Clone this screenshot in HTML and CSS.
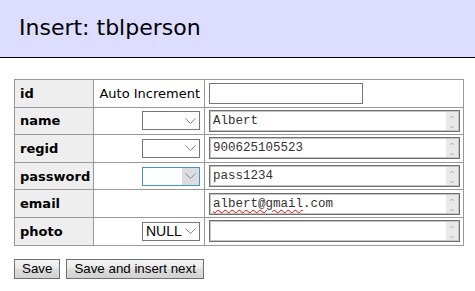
FILE: index.html
```html
<!DOCTYPE html>
<html>
<head>
  <title>Insert: tblperson</title>
  <link rel="stylesheet" href="styles.css">
</head>

<body>
  <h2 class="heading">Insert: tblperson</h2>

  <div class="content">
    <form id="edit-form">
      <table class="edit-table">
        <colgroup>
          <col class="col-name">
          <col class="col-function">
          <col class="col-value">
        </colgroup>
        <tr>
          <th>id</th>
          <td class="function">Auto Increment</td>
          <td class="value"><input type="text" class="auto-input" name="id"></td>
        </tr>
        <tr>
          <th>name</th>
          <td class="function"><select class="func"><option></option></select></td>
          <td class="value">
            <div class="area"><span class="area-text">Albert</span><span class="scroll"><svg width="12" height="20" viewBox="0 0 12 20"><path d="M4 6l2-2 2 2M4 14l2 2 2-2" fill="none" stroke="#b5b5b5"/></svg></span></div>
          </td>
        </tr>
        <tr>
          <th>regid</th>
          <td class="function"><select class="func"><option></option></select></td>
          <td class="value">
            <div class="area"><span class="area-text">900625105523</span><span class="scroll"><svg width="12" height="20" viewBox="0 0 12 20"><path d="M4 6l2-2 2 2M4 14l2 2 2-2" fill="none" stroke="#b5b5b5"/></svg></span></div>
          </td>
        </tr>
        <tr>
          <th>password</th>
          <td class="function"><select class="func focused"><option></option></select></td>
          <td class="value">
            <div class="area"><span class="area-text">pass1234</span><span class="scroll"><svg width="12" height="20" viewBox="0 0 12 20"><path d="M4 6l2-2 2 2M4 14l2 2 2-2" fill="none" stroke="#b5b5b5"/></svg></span></div>
          </td>
        </tr>
        <tr>
          <th>email</th>
          <td class="function"></td>
          <td class="value">
            <div class="area"><span class="area-text"><span class="misspelt">albert@gmail</span>.com</span><span class="scroll"><svg width="12" height="20" viewBox="0 0 12 20"><path d="M4 6l2-2 2 2M4 14l2 2 2-2" fill="none" stroke="#b5b5b5"/></svg></span></div>
          </td>
        </tr>
        <tr>
          <th>photo</th>
          <td class="function"><select class="func null"><option>NULL</option></select></td>
          <td class="value">
            <div class="area"><span class="area-text"></span><span class="scroll"><svg width="12" height="20" viewBox="0 0 12 20"><path d="M4 6l2-2 2 2M4 14l2 2 2-2" fill="none" stroke="#b5b5b5"/></svg></span></div>
          </td>
        </tr>
      </table>

      <div class="buttons">
        <button type="submit">Save</button>
        <button type="submit">Save and insert next</button>
      </div>
    </form>
  </div>
</body>

</html>
```

FILE: styles.css
```css
body {
  font-family: "DejaVu Sans", Verdana, sans-serif;
  font-size: 13px;
  color: #000;
  margin: 0;
  background-color: #fff;
}

.heading {
  margin: 0;
  padding: 17px 19px 18px;
  font-size: 22px;
  font-weight: normal;
  line-height: 22px;
  background-color: #ddf;
  border-bottom: 1px solid #000;
}

.content {
  padding: 21px 14px 0;
}

.edit-table {
  border-collapse: collapse;
  table-layout: fixed;
  width: 450px;
  border: 1px solid #999;
}

.col-name {
  width: 79px;
}

.col-function {
  width: 111px;
}

.col-value {
  width: 259px;
}

.edit-table th,
.edit-table td {
  border: 1px solid #999;
  height: 26.6px;
  padding: 0 4px;
  vertical-align: middle;
}

.edit-table th {
  background-color: #eee;
  text-align: left;
  font-weight: bold;
  padding-left: 5px;
}

.edit-table td.function {
  text-align: right;
  white-space: nowrap;
}

.func {
  appearance: none;
  width: 58px;
  height: 19px;
  margin: 0;
  padding: 0 0 0 3px;
  display: block;
  margin-left: auto;
  border: 1px solid #767676;
  border-radius: 0;
  font-family: "Liberation Sans", Arial, sans-serif;
  font-size: 14px;
  background: #fff url("data:image/svg+xml,%3Csvg xmlns='http://www.w3.org/2000/svg' width='11' height='6'%3E%3Cpath d='M0.5 0.5l5 5 5-5' fill='none' stroke='%23888'/%3E%3C/svg%3E") no-repeat right 3px center;
}

.func.focused {
  border-color: #3c96d2;
  background: url("data:image/svg+xml,%3Csvg xmlns='http://www.w3.org/2000/svg' width='11' height='6'%3E%3Cpath d='M0.5 0.5l5 5 5-5' fill='none' stroke='%23888'/%3E%3C/svg%3E") no-repeat right 3px center,
    linear-gradient(#ddd, #ddd) no-repeat right top / 17px 100%,
    #fff;
}

.auto-input {
  display: block;
  width: 154px;
  height: 21px;
  margin: 0;
  box-sizing: border-box;
  border: 1px solid #767676;
  padding: 0 2px;
}

.area {
  display: flex;
  width: 251px;
  height: 22px;
  box-sizing: border-box;
  border: 1px solid #6f6f6f;
  box-shadow: inset 0 0 0 1px #c4c4c4;
  background-color: #fff;
}

.area-text {
  flex: 1;
  padding: 2px 0 0 3px;
  font-family: "Liberation Mono", "Courier New", monospace;
  font-size: 12.5px;
  line-height: 16px;
  color: #333;
  white-space: nowrap;
  overflow: hidden;
}

.misspelt {
  text-decoration: underline wavy #e00;
  text-decoration-thickness: 1px;
  text-underline-offset: 2px;
}

.scroll {
  width: 12px;
  margin: 1px 1px 1px 0;
  background-color: #e9e9e9;
  display: flex;
}

.buttons {
  margin-top: 13px;
  display: flex;
  gap: 6px;
}

.buttons button {
  height: 20px;
  padding: 0 7px;
  margin: 0;
  font-family: "Liberation Sans", Arial, sans-serif;
  font-size: 13.33px;
  color: #000;
  border: 1px solid #707070;
  border-radius: 0;
  background: linear-gradient(#f4f4f4, #e8e8e8 50%, #dcdcdc 51%, #d2d2d2);
  cursor: pointer;
}
```
